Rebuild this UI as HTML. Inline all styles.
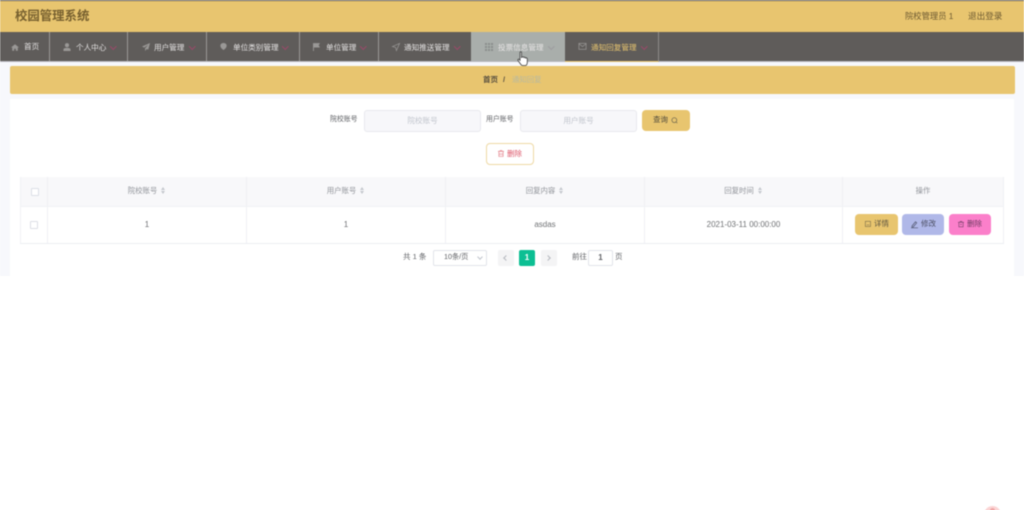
<!DOCTYPE html>
<html lang="zh">
<head>
<meta charset="utf-8">
<title>校园管理系统</title>
<style>
html,body{margin:0;padding:0;background:#fff;width:1024px;height:510px;overflow:hidden}
body{position:relative;font-family:"Liberation Sans","Noto Sans CJK SC",sans-serif;color:#606266}
#clip{position:absolute;left:0;top:0;width:1024px;height:510px;overflow:hidden}
#root{position:absolute;left:0;top:0;width:1024px;height:510px;filter:blur(.5px)}
.a{position:absolute;white-space:nowrap}
.c{text-align:center}
.nav{position:absolute;top:32px;height:29px;border-right:1px solid #9a9896;box-sizing:border-box}
.nt{position:absolute;top:10px;font-size:7.6px;line-height:12px;color:#e6e4e4;white-space:nowrap}
.chev{position:absolute;top:12px;width:3.500px;height:3.500px;border-right:1px solid #9a4a6a;border-bottom:1px solid #9a4a6a;transform:rotate(45deg)}
svg{position:absolute;overflow:visible}
.inp{position:absolute;top:110px;width:115px;height:20px;background:#f7f7fa;border:1px solid #e8e9ee;border-radius:3px;font-size:7.600px;line-height:20px;text-align:center;color:#c0c4cc}
.btn{position:absolute;top:214px;height:21px;border-radius:4px}
.th{position:absolute;top:177px;height:29px;font-size:7.400px;line-height:28px;text-align:center;color:#909399;background:#f8f8fa;border-right:1px solid #eff0f4;box-sizing:border-box}
.td{position:absolute;top:207px;height:36px;font-size:8px;line-height:35px;text-align:center;color:#707275;border-right:1px solid #eff0f4;box-sizing:border-box}
.sort{display:inline-block;width:5px;height:7px;position:relative;margin-left:4px;vertical-align:-1px}
.sort:before,.sort:after{content:"";position:absolute;left:0;border-left:2.500px solid transparent;border-right:2.500px solid transparent}
.sort:before{top:0;border-bottom:3px solid #c4c7cd}
.sort:after{bottom:0;border-top:3px solid #c4c7cd}
.cb{position:absolute;width:6px;height:6px;background:#fff;border:1px solid #dcdfe6;border-radius:1px}
.s{font-size:7.500px;line-height:12px}
</style>
</head>
<body>
<div id="clip">
<div id="root">
<div class="a" style="left:0;top:0;width:1024px;height:276px;background:#f7f8fc"></div>

<div class="a" style="left:0;top:0;width:1024px;height:1px;background:#5d5a58"></div>
<div class="a" style="left:0;top:1px;width:1024px;height:31px;background:#e8c56f"></div>
<div class="a" style="left:15px;top:7px;font-size:12.400px;line-height:18px;font-weight:700;color:#77602f">校园管理系统</div>
<div class="a" style="left:905px;top:10px;font-size:8.300px;line-height:12px;color:#6d5a32">院校管理员 1</div>
<div class="a" style="left:968px;top:10px;font-size:8.600px;line-height:12px;color:#6d5a32">退出登录</div>

<div class="a" style="left:0;top:32px;width:1024px;height:29px;background:#5f5c5a"></div>
<div class="a" style="left:0;top:61px;width:1024px;height:1px;background:#b9b9c0"></div>

<div class="nav" style="left:0;width:50px">
  <svg style="left:11px;top:12px" width="8" height="7" viewBox="0 0 10 8"><path d="M0 4L5 0l5 4H8.500V8H6V5.500H4V8H1.500V4z" fill="#9a9896"/></svg>
  <div class="nt" style="left:24px;top:9px">首页</div>
</div>
<div class="nav" style="left:50px;width:78px">
  <svg style="left:13px;top:11px" width="8" height="8" viewBox="0 0 9 9"><circle cx="4.500" cy="2.500" r="2.300" fill="#9a9896"/><path d="M.5 9V7.500C.5 6 2 5.500 4.500 5.500S8.500 6 8.500 7.500V9z" fill="#9a9896"/></svg>
  <div class="nt" style="left:26px">个人中心</div>
  <div class="chev" style="left:61px"></div>
</div>
<div class="nav" style="left:128px;width:79px">
  <svg style="left:14px;top:11px" width="8" height="8" viewBox="0 0 9 9"><path d="M9 0L0 4l2.500 1.200L7 2 3.500 6v3l1.800-2.300L7 7.500z" fill="#9a9896"/></svg>
  <div class="nt" style="left:26px">用户管理</div>
  <div class="chev" style="left:62px"></div>
</div>
<div class="nav" style="left:207px;width:93px">
  <svg style="left:13px;top:10px" width="7" height="9" viewBox="0 0 9 9"><path d="M4.500 0C7 0 8.500 1.500 8.500 3.500 8.500 6 6 8 4.500 9 3 8 .5 6 .5 3.500.5 1.500 2 0 4.500 0z" fill="#9a9896"/></svg>
  <div class="nt" style="left:26px">单位类别管理</div>
  <div class="chev" style="left:76px"></div>
</div>
<div class="nav" style="left:300px;width:79px">
  <svg style="left:13px;top:11px" width="7" height="8" viewBox="0 0 8 9"><path d="M0 0H8L6.500 2.500 8 5H1V9H0z" fill="#9a9896"/></svg>
  <div class="nt" style="left:26px">单位管理</div>
  <div class="chev" style="left:61px"></div>
</div>
<div class="nav" style="left:379px;width:92px;border-right:0">
  <svg style="left:13px;top:11px" width="8" height="8" viewBox="0 0 9 9"><path d="M8.500.5L.5 4l3.500 1L5 8.500z" fill="none" stroke="#9a9896" stroke-width=".8"/></svg>
  <div class="nt" style="left:25px">通知推送管理</div>
  <div class="chev" style="left:76px"></div>
</div>
<div class="nav" style="left:471px;width:94px;background:#a9aeab;border-right:0">
  <svg style="left:14px;top:11px" width="8" height="8" viewBox="0 0 8 8"><path d="M0 0H2V2H0zM3 0H5V2H3zM6 0H8V2H6zM0 3H2V5H0zM3 3H5V5H3zM6 3H8V5H6zM0 6H2V8H0zM3 6H5V8H3zM6 6H8V8H6z" fill="#8a8e8c"/></svg>
  <div class="nt" style="left:27px">投票信息管理</div>
  <div class="chev" style="left:78px;border-color:#9d9ca0"></div>
</div>
<div class="nav" style="left:565px;width:94px;border-right:1px solid #8d8b89;border-bottom:1px solid #e8c56f;height:30px">
  <svg style="left:13px;top:11px" width="9" height="7" viewBox="0 0 9 8"><rect x=".4" y=".4" width="8.200" height="6.800" fill="none" stroke="#9a9896" stroke-width=".8"/><path d="M.5 1L4.500 4 8.500 1" fill="none" stroke="#9a9896" stroke-width=".8"/></svg>
  <div class="nt" style="left:26px;color:#e8c56f">通知回复管理</div>
  <div class="chev" style="left:77px"></div>
</div>

<svg style="left:516px;top:51px" width="14" height="16" viewBox="0 0 14 16"><path d="M4 1.500C4 .6 5.500 .6 5.500 1.500V6.500L6.500 6C7 5.500 8 5.700 8 6.500 8.500 6 9.600 6.200 9.600 7 10.200 6.600 11.300 7 11.300 8V11.500C11.300 13 10.500 14.500 9.500 14.500H6.500C5.500 14.500 5 13.800 4.500 13L2 9.500C1.500 8.500 2.600 7.800 3.300 8.500L4 9.300z" fill="#fff" stroke="#3a3a3a" stroke-width=".8"/></svg>

<div class="a" style="left:10px;top:66px;width:1005px;height:28px;background:#e8c56f;border-radius:2px"></div>
<div class="a s" style="left:483px;top:74px;font-weight:700;color:#5a5140">首页</div>
<div class="a s" style="left:503px;top:74px;font-weight:700;color:#5a5140">/</div>
<div class="a" style="left:512px;top:74px;font-size:7.400px;line-height:12px;color:#b8b9a0">通知回复</div>

<div class="a" style="left:10px;top:99px;width:1004px;height:177px;background:#fff"></div>

<div class="a" style="left:330px;top:114px;font-size:6.900px;line-height:12px;color:#606266">院校账号</div>
<div class="inp" style="left:364px">院校账号</div>
<div class="a" style="left:486px;top:114px;font-size:6.900px;line-height:12px;color:#606266">用户账号</div>
<div class="inp" style="left:520px">用户账号</div>
<div class="a c" style="left:642px;top:110px;width:48px;height:21px;background:#e8c56f;border-radius:4px"></div>
<div class="a s" style="left:653px;top:114px;color:#4f4a3c">查询</div>
<svg style="left:671px;top:117px" width="7" height="7" viewBox="0 0 8 8"><circle cx="3.800" cy="3.600" r="2.800" fill="none" stroke="#5e5a4a" stroke-width=".7"/><path d="M6 5.800L7.200 7" stroke="#5e5a4a" stroke-width=".7"/></svg>

<div class="a" style="left:486px;top:143px;width:46px;height:20px;background:#fff;border:1px solid #eed9a4;border-radius:4px"></div>
<svg style="left:498px;top:150px" width="6" height="7" viewBox="0 0 7 8"><path d="M1 2V7.500H6V2M0 1.500H7M2.500 1.500V.5H4.500V1.500M2.500 3.500V6M4.500 3.500V6" fill="none" stroke="#e0707a" stroke-width=".7"/></svg>
<div class="a s" style="left:507px;top:148px;color:#dc5568">删除</div>

<div class="a" style="left:20px;top:177px;width:984px;height:67px;background:#fff;border-bottom:1px solid #eceef2;box-sizing:border-box"></div>
<div class="a" style="left:20px;top:206px;width:984px;height:1px;background:#f1f2f5"></div>

<div class="th" style="left:20px;width:28px;border-left:1px solid #f1f2f5"></div>
<div class="cb" style="left:31px;top:188px"></div>
<div class="th" style="left:48px;width:199px">院校账号<span class="sort"></span></div>
<div class="th" style="left:247px;width:199px">用户账号<span class="sort"></span></div>
<div class="th" style="left:446px;width:199px">回复内容<span class="sort"></span></div>
<div class="th" style="left:645px;width:198px">回复时间<span class="sort"></span></div>
<div class="th" style="left:843px;width:161px">操作</div>

<div class="td" style="left:20px;width:28px;border-left:1px solid #f1f2f5"></div>
<div class="cb" style="left:30px;top:221px"></div>
<div class="td" style="left:48px;width:199px">1</div>
<div class="td" style="left:247px;width:199px">1</div>
<div class="td" style="left:446px;width:199px">asdas</div>
<div class="td" style="left:645px;width:198px">2021-03-11 00:00:00</div>
<div class="td" style="left:843px;width:161px"></div>

<div class="btn" style="left:855px;width:43px;background:#e8c56f"></div>
<svg style="left:865px;top:221px" width="6" height="6" viewBox="0 0 7 7"><rect x=".4" y=".4" width="6" height="6" fill="none" stroke="#7a6c48" stroke-width=".7"/><path d="M2 4.500H5" stroke="#7a6c48" stroke-width=".6"/></svg>
<div class="a s" style="left:874px;top:218px;color:#5a5240">详情</div>
<div class="btn" style="left:902px;width:42px;background:#b0b8e8"></div>
<svg style="left:911px;top:221px" width="7" height="7" viewBox="0 0 7 7"><path d="M1 5L4.500.8 5.700 1.800 2.200 6H1zM0 6.800H7" fill="none" stroke="#50566e" stroke-width=".7"/></svg>
<div class="a s" style="left:921px;top:218px;color:#4b4e62">修改</div>
<div class="btn" style="left:949px;width:42px;background:#fb7fca"></div>
<svg style="left:958px;top:221px" width="6" height="6" viewBox="0 0 7 7"><path d="M1 1.500V6.800H6V1.500M0 1.500H7M2.500 1.500V.5H4.500V1.500M2.500 4H4.500" fill="none" stroke="#78406a" stroke-width=".7"/></svg>
<div class="a s" style="left:967px;top:218px;color:#6b3a60">删除</div>

<div class="a s" style="left:403px;top:251px;color:#606266">共 1 条</div>
<div class="a" style="left:433px;top:250px;width:52px;height:14px;background:#fff;border:1px solid #e2e4ea;border-radius:2px"></div>
<div class="a" style="left:444px;top:251px;font-size:7.200px;line-height:12px;color:#606266">10条/页</div>
<div class="a" style="left:478px;top:255px;width:3px;height:3px;border-right:1px solid #c0c4cc;border-bottom:1px solid #c0c4cc;transform:rotate(45deg)"></div>
<div class="a" style="left:498px;top:250px;width:16px;height:16px;background:#f4f4f5;border-radius:2px"></div>
<div class="a" style="left:504px;top:256px;width:3px;height:3px;border-left:1px solid #b5b8bf;border-bottom:1px solid #b5b8bf;transform:rotate(45deg)"></div>
<div class="a c" style="left:519px;top:250px;width:16px;height:16px;background:#0cbf93;border-radius:2px;font-size:8px;line-height:15px;font-weight:700;color:#fff">1</div>
<div class="a" style="left:541px;top:250px;width:16px;height:16px;background:#f4f4f5;border-radius:2px"></div>
<div class="a" style="left:546px;top:256px;width:3px;height:3px;border-right:1px solid #b5b8bf;border-top:1px solid #b5b8bf;transform:rotate(45deg)"></div>
<div class="a s" style="left:572px;top:251px;color:#606266">前往</div>
<div class="a c" style="left:588px;top:250px;width:23px;height:14px;background:#fff;border:1px solid #e2e4ea;border-radius:2px;font-size:8px;line-height:14px;font-weight:700;color:#606266">1</div>
<div class="a s" style="left:615px;top:251px;color:#606266">页</div>

<div class="a" style="left:984px;top:506px;width:17px;height:17px;border-radius:50%;background:#fbd5d5"></div>
<div class="a" style="left:990px;top:508px;width:5px;height:5px;border-radius:50%;background:#f0a8a8"></div>
</div>
</div>
</body>
</html>
